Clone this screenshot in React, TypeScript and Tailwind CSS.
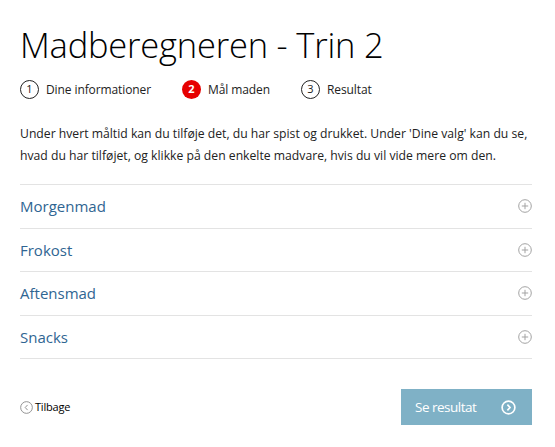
import React from 'react'

const meals = ['Morgenmad', 'Frokost', 'Aftensmad', 'Snacks']

function PlusCircle() {
  return (
    <svg width="14" height="14" viewBox="0 0 14 14" fill="none" stroke="#a3a3a3" strokeWidth="1">
      <circle cx="7" cy="7" r="6.3" />
      <path d="M7 3.8v6.4M3.8 7h6.4" />
    </svg>
  )
}

function Step({ n, label, active }: { n: number; label: string; active?: boolean }) {
  return (
    <div className="flex items-center gap-[7px]">
      <span
        className={
          active
            ? 'flex h-[19px] w-[19px] items-center justify-center rounded-full bg-[#e60000] text-[11px] font-bold text-white'
            : 'flex h-[19px] w-[19px] items-center justify-center rounded-full border border-[#222] text-[11px] text-[#222]'
        }
      >
        {n}
      </span>
      <span className="text-[12px] tracking-[-0.1px] text-[#222]">{label}</span>
    </div>
  )
}

export default function App() {
  return (
    <div className="min-h-screen bg-white px-5 pt-[22px] font-['Open_Sans',sans-serif] text-[#222]">
      <h1 className="text-[34.5px] font-light leading-[46px] tracking-[-0.2px] text-black">Madberegneren - Trin 2</h1>

      <div className="mt-[12px] flex items-center">
        <div className="w-[162px]">
          <Step n={1} label="Dine informationer" />
        </div>
        <div className="w-[119px]">
          <Step n={2} label="Mål maden" active />
        </div>
        <Step n={3} label="Resultat" />
      </div>

      <p className="mt-[24px] w-[515px] text-[12.2px] leading-[22px] text-[#222]">
        Under hvert måltid kan du tilføje det, du har spist og drukket. Under 'Dine valg' kan du se, hvad du har tilføjet, og klikke på den enkelte madvare, hvis du vil vide mere om den.
      </p>

      <div className="mt-[17px] w-[512px] border-t border-[#e3e3e3]">
        {meals.map((m) => (
          <div key={m} className="flex h-[43.5px] items-center justify-between border-b border-[#e3e3e3]">
            <span className="text-[15px] text-[#2f6592]">{m}</span>
            <PlusCircle />
          </div>
        ))}
      </div>

      <div className="mt-[30px] flex w-[512px] items-center justify-between">
        <div className="flex items-center gap-[2px]">
          <svg width="13" height="13" viewBox="0 0 14 14" fill="none" stroke="#8a8a8a" strokeWidth="1">
            <circle cx="7" cy="7" r="6.3" />
            <path d="M8.2 4.2 5.6 7l2.6 2.8" />
          </svg>
          <span className="text-[11px] tracking-[-0.2px] text-black">Tilbage</span>
        </div>
        <button className="flex h-[36px] w-[131px] items-center justify-between bg-[#7fb1c6] pl-[14px] pr-[16px] text-[13.5px] tracking-[-0.5px] text-white">
          <span>Se resultat</span>
          <svg width="15" height="15" viewBox="0 0 16 16" fill="none" stroke="white" strokeWidth="1.8">
            <circle cx="8" cy="8" r="6.8" />
            <path d="M6.8 5 9.6 8l-2.8 3" />
          </svg>
        </button>
      </div>
    </div>
  )
}
